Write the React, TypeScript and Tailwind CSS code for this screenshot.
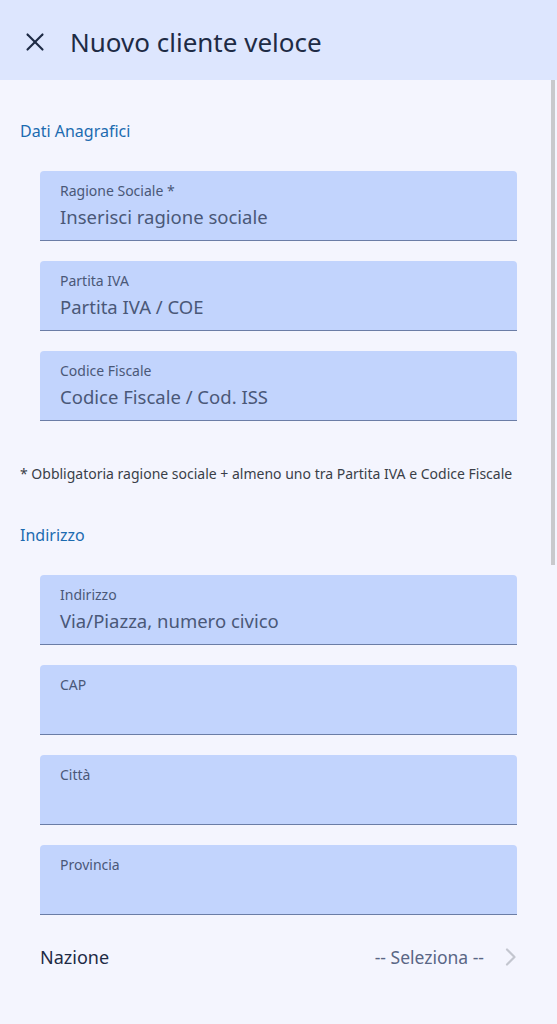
import { X } from "lucide-react";

const font = { fontFamily: '"Noto Sans", "Open Sans", sans-serif' };

function Field({ label, placeholder }: { label: string; placeholder?: string }) {
  return (
    <div className="h-[70px] rounded-t-[4px] border-b-[1.5px] border-[#6b7da6] bg-[#c2d4fd] px-5 pt-[10px]">
      <div className="text-[14px] leading-[20px] text-[#4a5878]">{label}</div>
      <div className="mt-[3px] text-[18.5px] leading-[26px] text-[#4a5878]">{placeholder ?? ""}</div>
    </div>
  );
}

export default function App() {
  return (
    <div className="relative h-[1024px] w-[557px] overflow-hidden bg-[#f4f5fe]" style={font}>
      <header className="flex h-20 items-center bg-[#dde6fe] pl-[20px] pt-[4px]">
        <X size={30} strokeWidth={1.7} className="text-[#1e2b45]" />
        <h1 className="ml-[20px] text-[26px] text-[#1e2b45]">Nuovo cliente veloce</h1>
      </header>

      <div className="absolute right-[2px] top-20 h-[485px] w-[4px] bg-[#c9c9cc]" />

      <main className="px-5 pt-[39px]">
        <h2 className="text-[16px] leading-[24px] text-[#1c6bb0]">Dati Anagrafici</h2>
        <div className="mt-[28px] flex flex-col gap-5 pl-5 pr-[20px]">
          <Field label="Ragione Sociale *" placeholder="Inserisci ragione sociale" />
          <Field label="Partita IVA" placeholder="Partita IVA / COE" />
          <Field label="Codice Fiscale" placeholder="Codice Fiscale / Cod. ISS" />
        </div>

        <p className="mt-[42px] text-[14px] leading-[22px] text-[#3a3f48]">
          * Obbligatoria ragione sociale + almeno uno tra Partita IVA e Codice Fiscale
        </p>

        <h2 className="mt-[38px] text-[16px] leading-[24px] text-[#1c6bb0]">Indirizzo</h2>
        <div className="mt-[28px] flex flex-col gap-5 pl-5 pr-[20px]">
          <Field label="Indirizzo" placeholder="Via/Piazza, numero civico" />
          <Field label="CAP" />
          <Field label="Città" />
          <Field label="Provincia" />
        </div>

        <div className="mt-[28px] flex items-center pl-5 pr-[20px]">
          <span className="text-[18px] leading-[28px] text-[#1e2b45]">Nazione</span>
          <span className="ml-auto text-[17.5px] leading-[28px] text-[#5a6685]">-- Seleziona --</span>
          <svg width="12" height="18" viewBox="0 0 12 18" className="ml-[21px]" fill="none">
            <polyline points="2,1.5 9.5,9 2,16.5" stroke="#c3c6cf" strokeWidth="2.2" strokeLinecap="round" strokeLinejoin="round" />
          </svg>
        </div>
      </main>
    </div>
  );
}
